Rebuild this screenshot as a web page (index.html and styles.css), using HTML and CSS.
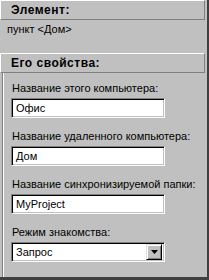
FILE: index.html
```html
<!DOCTYPE html>
<html lang="ru">
<head>
    <meta charset="UTF-8">
    <title>Свойства элемента</title>
    <link rel="stylesheet" href="styles.css">
</head>
<body>
    <div class="pane">
        <div class="bar">Элемент:</div>
        <div class="item">пункт &lt;Дом&gt;</div>
        <div class="bar">Его свойства:</div>

        <div class="props">
            <div class="field">
                <label>Название этого компьютера:</label>
                <div class="edit">Офис</div>
            </div>
            <div class="field">
                <label>Название удаленного компьютера:</label>
                <div class="edit">Дом</div>
            </div>
            <div class="field">
                <label>Название синхронизируемой папки:</label>
                <div class="edit">MyProject</div>
            </div>
            <div class="field">
                <label>Режим знакомства:</label>
                <div class="edit combo">
                    <span class="combo-text">Запрос</span>
                    <span class="combo-btn">
                        <svg width="7" height="4" viewBox="0 0 7 4"><path d="M0 0h7L3.5 4z" fill="#000"/></svg>
                    </span>
                </div>
            </div>
        </div>
    </div>
</body>
</html>
```

FILE: styles.css
```css
body { margin: 0; background: #c0c0c0; font-family: "Liberation Sans", Arial, sans-serif; font-size: 11px; color: #000; }
.pane { width: 209px; height: 280px; box-sizing: border-box; border-right: 2px solid #404040; border-bottom: 3px solid #404040; display: flex; flex-direction: column; overflow: hidden; }
.bar { width: 205px; height: 20px; box-sizing: border-box; border-top: 1px solid #fff; border-left: 1px solid #fff; border-bottom: 1px solid #808080; border-right: 1px solid #808080; padding-left: 10px; font-size: 12px; font-weight: bold; letter-spacing: 0.5px; line-height: 18px; }
.item { height: 33px; box-sizing: border-box; padding: 3px 0 0 7px; line-height: 13px; }
.props { flex: 1; margin-left: 2px; width: 203px; box-sizing: border-box; border-left: 1px solid #808080; box-shadow: inset 1px 0 #fff; padding: 9px 0 0 8px; display: flex; flex-direction: column; gap: 12px; }
.field { display: flex; flex-direction: column; gap: 3px; }
.field label { line-height: 13px; padding-left: 1px; }
.edit { width: 154px; height: 20px; box-sizing: border-box; background: #fff; border: 1px solid; border-color: #808080 #fff #fff #808080; box-shadow: inset 1px 1px #000, inset -1px -1px #c0c0c0; padding: 0 0 0 4px; line-height: 18px; }
.combo { display: flex; align-items: stretch; padding-right: 2px; padding-top: 1px; padding-bottom: 1px; }
.combo-text { flex: 1; line-height: 16px; }
.combo-btn { width: 16px; box-sizing: border-box; background: #c0c0c0; border: 1px solid; border-color: #dfdfdf #000 #000 #dfdfdf; box-shadow: inset 1px 1px #fff, inset -1px -1px #808080; display: flex; align-items: center; justify-content: center; }
```
